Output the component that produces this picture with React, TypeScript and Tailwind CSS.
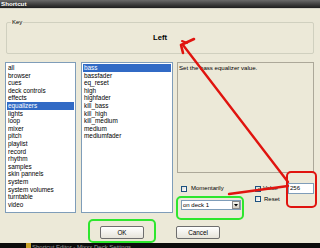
import React from 'react';

const categories = [
  'all', 'browser', 'cues', 'deck controls', 'effects', 'equalizers', 'lights', 'loop', 'mixer',
  'pitch', 'playlist', 'record', 'rhythm', 'samples', 'skin pannels', 'system', 'system volumes',
  'turntable', 'video',
];

const actions = [
  'bass', 'bassfader', 'eq_reset', 'high', 'highfader', 'kill_bass', 'kill_high', 'kill_medium',
  'medium', 'mediumfader',
];

const ListBox = ({ items, selected, width }: { items: string[]; selected: string; width: string }) => (
  <div className={`${width} h-[151px] border border-[#7f9db9] bg-white pt-[1px] px-[1px] overflow-hidden`}>
    {items.map((item) => (
      <div
        key={item}
        className={`h-[7.6px] leading-[7.6px] pl-[1px] text-[6.4px] whitespace-nowrap ${
          item === selected ? 'bg-[#316ac5] text-white' : 'text-black'
        }`}
      >
        {item}
      </div>
    ))}
  </div>
);

const CheckBox = ({ checked = false }: { checked?: boolean }) => (
  <div className="w-[6px] h-[6px] border border-[#1c5180] bg-linear-to-br from-[#dcdcd7] to-white flex items-center justify-center">
    {checked && (
      <svg width="4" height="4" viewBox="0 0 4 4">
        <path d="M0.5 2 L1.5 3.2 L3.5 0.8" stroke="#21a121" strokeWidth="0.9" fill="none" />
      </svg>
    )}
  </div>
);

const Button = ({ label }: { label: string }) => (
  <div className="w-[44px] h-[13px] border border-[#6e6e6e] rounded-[2px] bg-linear-to-b from-white to-[#e6e4da] flex items-center justify-center text-[6.3px] text-black">
    {label}
  </div>
);

export default function App() {
  return (
    <div className="relative w-[320px] h-[248px] bg-[#ece9d8] flex flex-col overflow-hidden font-['Liberation_Sans',Arial,sans-serif]">
      {/* Title bar */}
      <div className="h-[8px] bg-linear-to-b from-[#6a6a6a] to-[#1e1e1e] flex items-center pl-[1px]">
        <span className="text-[6.2px] font-bold text-white leading-none">Shortcut</span>
      </div>
      <div className="h-[1px] bg-[#d6d4c8]" />

      {/* Key group */}
      <div className="px-[6px] mt-[13px]">
        <div className="relative h-[32px] border border-[#d0d0bf] rounded-[2px] flex items-center justify-center">
          <span className="absolute -top-[4px] left-[4px] bg-[#ece9d8] px-[1px] text-[6px] leading-[7px] text-black">
            Key
          </span>
          <span className="text-[7.6px] font-bold text-black">Left</span>
        </div>
      </div>

      {/* Main area */}
      <div className="flex mt-[8px] pl-[5px]">
        <ListBox items={categories} selected="equalizers" width="w-[71px]" />
        <div className="ml-[5px]">
          <ListBox items={actions} selected="bass" width="w-[92px]" />
        </div>
        <div className="ml-[4px] w-[137px] flex flex-col">
          <div className="h-[111px] border border-[#aca899] pl-[1px] pt-[1px] text-[6.1px] leading-[7px] text-black">
            Set the bass equalizer value.
          </div>
          <div className="mt-[10px] pl-[4px] grid grid-cols-[74px_33px_26px] grid-rows-[11px_auto]">
            <div className="flex items-center gap-[4px]">
              <CheckBox />
              <span className="text-[6px] text-black">Momentarily</span>
            </div>
            <div className="flex items-center gap-[2px]">
              <CheckBox checked />
              <span className="text-[6px] text-black">Value</span>
            </div>
            <div className="h-[11px] border border-[#7f9db9] bg-white text-[6px] leading-[9px] pl-[1px] text-black">
              256
            </div>
            <div className="mt-[6px] w-[60px] h-[10px] border border-[#7f9db9] bg-white flex items-center justify-between pl-[1px]">
              <span className="text-[6px] text-black">on deck 1</span>
              <div className="w-[8px] h-[8px] mr-[0.5px] border border-[#8a8a8a] bg-linear-to-b from-[#f5f5f0] to-[#d4d0c4] flex items-center justify-center">
                <svg width="4" height="3" viewBox="0 0 4 3">
                  <path d="M0 0 H4 L2 2.5 Z" fill="#000" />
                </svg>
              </div>
            </div>
            <div className="mt-[2px] flex items-start gap-[3px]">
              <CheckBox />
              <span className="text-[6px] leading-[6px] text-black">Reset</span>
            </div>
          </div>
        </div>
      </div>

      {/* Buttons */}
      <div className="mt-[13px] flex justify-center gap-[32px]">
        <Button label="OK" />
        <Button label="Cancel" />
      </div>

      <div className="flex-1" />
      {/* Taskbar strip */}
      <div className="h-[5px] bg-[#0c0c0c] flex items-start overflow-hidden pl-[26px] gap-[1px]">
        <div className="w-[5px] h-[5px] bg-[#c9a227]" />
        <span className="text-[6px] leading-[9px] text-[#9a9a9a] whitespace-nowrap">Shortcut Editor - Mixxx Deck Settings</span>
      </div>

      {/* Annotations */}
      <svg className="absolute inset-0 pointer-events-none" width="320" height="248" viewBox="0 0 320 248">
        <g stroke="#e0140f" fill="none" strokeLinecap="round" strokeLinejoin="round">
          <line x1="288" y1="182" x2="183" y2="45" strokeWidth="2.4" />
          <path d="M194 39 L181 45 L183 53" strokeWidth="2.6" />
          <path d="M182 41 L187 43" strokeWidth="2" />
          <line x1="229" y1="194" x2="288" y2="186" strokeWidth="2.4" />
          <rect x="287" y="172" width="29" height="35" rx="4" strokeWidth="2" />
        </g>
        <g stroke="#2ee62e" fill="none" strokeWidth="2">
          <rect x="177" y="197" width="66" height="22" rx="4" />
          <rect x="89" y="220" width="66" height="22" rx="4" />
        </g>
      </svg>
    </div>
  );
}
